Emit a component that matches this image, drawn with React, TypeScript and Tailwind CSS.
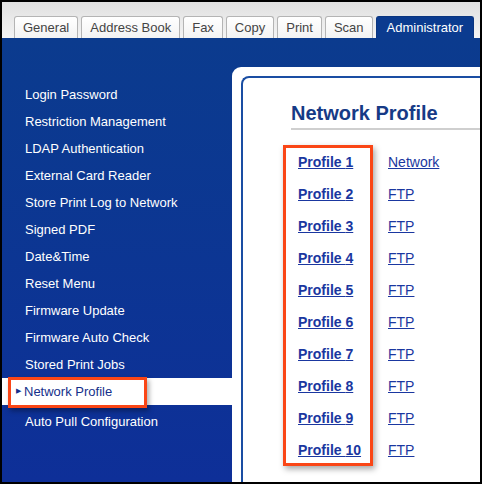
const tabs = ["General", "Address Book", "Fax", "Copy", "Print", "Scan"];

const menu = [
  "Login Password",
  "Restriction Management",
  "LDAP Authentication",
  "External Card Reader",
  "Store Print Log to Network",
  "Signed PDF",
  "Date&Time",
  "Reset Menu",
  "Firmware Update",
  "Firmware Auto Check",
  "Stored Print Jobs",
];

const profiles = [
  "Network",
  "FTP",
  "FTP",
  "FTP",
  "FTP",
  "FTP",
  "FTP",
  "FTP",
  "FTP",
  "FTP",
];

function Tab({ label, active }: { label: string; active?: boolean }) {
  if (active) {
    return (
      <div className="h-[22px] shrink-0 whitespace-nowrap px-[10px] flex items-center rounded-t-[3px] border border-b-0 border-[#0a3580] bg-[#0b3b8f] text-white text-[13px]">
        {label}
      </div>
    );
  }
  return (
    <div className="h-[22px] shrink-0 whitespace-nowrap px-[8px] flex items-center rounded-t-[3px] border border-b-0 border-[#b4b4b4] bg-gradient-to-b from-[#ffffff] to-[#f3f3f3] text-[#444] text-[13px]">
      {label}
    </div>
  );
}

export default function App() {
  return (
    <div
      className="w-[482px] h-[484px] border-2 border-black flex flex-col overflow-hidden"
      style={{ fontFamily: '"Liberation Sans", Arial, sans-serif' }}
    >
      <div className="h-[36px] shrink-0 bg-gradient-to-b from-[#e0e0e0] to-[#f4f4f4] flex items-end pl-[12px] gap-[3px] overflow-hidden">
        {tabs.map((t) => (
          <Tab key={t} label={t} />
        ))}
        <Tab label="Administrator" active />
      </div>

      <div className="flex-1 flex bg-gradient-to-b from-[#0b3b8e] to-[#0e2f98]">
        <div className="w-[230px] shrink-0 pt-[43px]">
          {menu.map((m) => (
            <div key={m} className="h-[27px] flex items-center pl-[23px] text-white text-[13px]">
              {m}
            </div>
          ))}
          <div className="relative h-[27px] flex items-center bg-white pl-[14px] text-[#15308a] text-[13px]">
            <span className="text-[7px] mr-[3px] text-[#15308a]">▶</span>
            Network Profile
            <div className="absolute left-[6px] top-[-1.5px] w-[139px] h-[31px] border-[3px] border-[#fa4616] shadow-[2px_3px_5px_rgba(0,0,0,0.35)]" />
          </div>
          <div className="h-[27px] mt-[3px] flex items-center pl-[23px] text-white text-[13px]">
            Auto Pull Configuration
          </div>
        </div>

        <div className="flex-1 flex flex-col pt-[29px]">
          <div className="flex-1 bg-white rounded-tl-[9px] pl-[9px] pt-[9px] flex">
            <div className="flex-1 border-l-2 border-t-2 border-[#1a4ea3] rounded-tl-[8px] pl-[48px] pt-[23px]">
              <div className="h-[29px] border-b-2 border-[#cfcfcf] text-[20px] font-bold leading-[24px] text-[#163a86]">
                Network Profile
              </div>
              <div className="relative mt-[16px] pl-[7px]">
                {profiles.map((p, i) => (
                  <div key={i} className="h-[32px] flex items-center text-[14px]">
                    <span className="w-[90px] font-bold underline text-[#1a37a0]">Profile {i + 1}</span>
                    <span className="underline text-[#1a37a0]">{p}</span>
                  </div>
                ))}
                <div className="absolute left-[-8px] top-[-1px] bottom-0 w-[90px] border-[3px] border-[#fa4616] shadow-[2px_3px_6px_rgba(0,0,0,0.35)]" />
              </div>
            </div>
          </div>
        </div>
      </div>
    </div>
  );
}
